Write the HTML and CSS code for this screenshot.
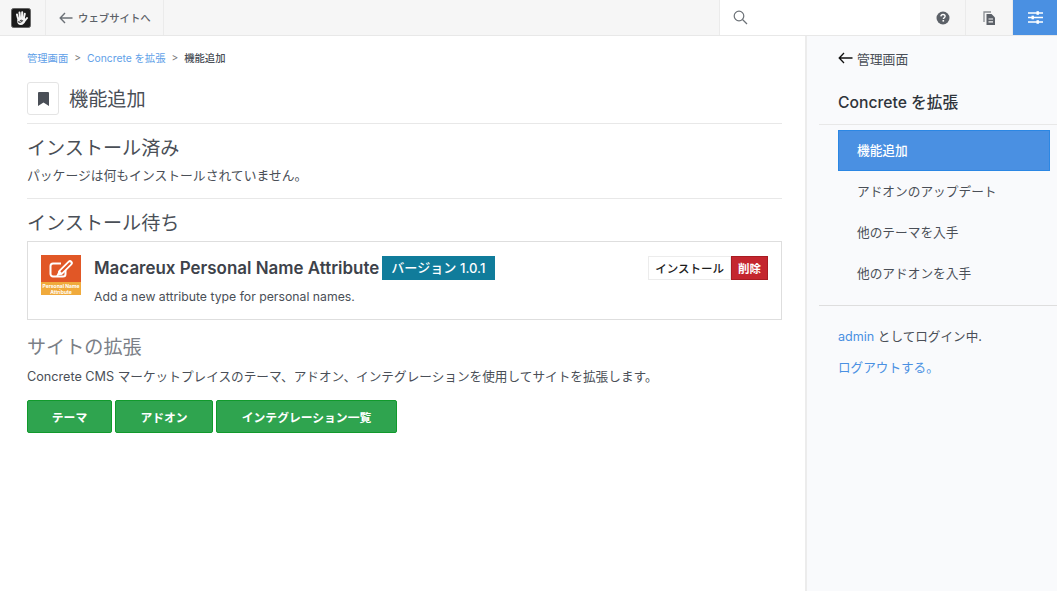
FILE: index.html
```html
<!DOCTYPE html>
<html lang="ja">
  <head>
    <meta charset="UTF-8" />
    <title>機能追加</title>
    <link rel="stylesheet" href="styles.css">
  </head>
  <body>
    <header class="toolbar">
      <div class="tool-logo">
        <svg width="20" height="20" viewBox="0 0 20 20">
          <rect x=".5" y=".5" width="19" height="19" rx="2" fill="#1b1b1b" stroke="#666"/>
          <g stroke="#f4f4f4" stroke-width="2" stroke-linecap="round" fill="none">
            <path d="M6 6.500 6.900 10"/>
            <path d="M8.500 4.500 9 9.500"/>
            <path d="M11.200 4.300 11 9.500"/>
            <path d="M13.800 5.800 12.800 10"/>
            <path d="M16 10 14 12.500"/>
          </g>
          <path d="M6.500 9.500h7.500l.5 3.500c-.8 2.500-2.500 4-4.700 3.900-2.300-.1-3.600-1.500-3.700-3.700z" fill="#f4f4f4"/>
          <path d="M6.800 13.500c1.400 1.300 3.800 1 4.800-.8-1.100-.8-2.500-.5-2.900.5" fill="none" stroke="#1b1b1b" stroke-width="1"/>
        </svg>
      </div>
      <a class="tool-back">
        <svg width="14" height="12" viewBox="0 0 14 12"><path d="M6 1 1.200 6 6 11M1.200 6H13.500" fill="none" stroke="#6c7177" stroke-width="1.400"/></svg>
        <span>ウェブサイトへ</span>
      </a>
      <div class="tool-fill"></div>
      <div class="tool-search">
        <svg width="15" height="15" viewBox="0 0 15 15"><circle cx="6" cy="6" r="4.800" fill="none" stroke="#6c7177" stroke-width="1.200"/><path d="m9.500 9.500 4.500 4.500" stroke="#6c7177" stroke-width="1.300"/></svg>
      </div>
      <div class="tool-btn">
        <svg width="14" height="14" viewBox="0 0 14 14"><circle cx="7" cy="7" r="6.500" fill="#5c6168"/><path d="M4.900 5.400C5 4.100 5.900 3.500 7 3.500c1.200 0 2.100.7 2.100 1.800 0 1.500-1.700 1.400-1.700 2.700" fill="none" stroke="#fff" stroke-width="1.400"/><rect x="6.500" y="9" width="1.600" height="1.600" fill="#fff"/></svg>
      </div>
      <div class="tool-btn tool-btn-wide">
        <svg width="13" height="14" viewBox="0 0 13 14"><path d="M1 11V1h7" fill="none" stroke="#8a8e93" stroke-width="1.300"/><path d="M3.500 3h5L12 6.500V14H3.500z" fill="#5c6168"/><path d="M5.500 8h4.500M5.500 10.800h4.500" stroke="#f8f8f8" stroke-width="1.200"/></svg>
      </div>
      <div class="tool-btn tool-active">
        <svg width="15" height="13" viewBox="0 0 15 13"><path d="M0 2h15M0 6.500h15M0 11h15" stroke="#fff" stroke-width="1.300"/><rect x="8.500" y=".2" width="2.400" height="3.600" fill="#fff"/><rect x="3.500" y="4.700" width="2.400" height="3.600" fill="#fff"/><rect x="8.500" y="9.200" width="2.400" height="3.600" fill="#fff"/></svg>
      </div>
    </header>

    <div class="page">
      <main class="content">
        <nav class="crumbs">
          <a>管理画面</a><i>&gt;</i><a>Concrete を拡張</a><i>&gt;</i><b>機能追加</b>
        </nav>
        <div class="title-row">
          <span class="title-icon">
            <svg width="11" height="14" viewBox="0 0 11 14"><path d="M0 1a1 1 0 0 1 1-1h9a1 1 0 0 1 1 1v13L5.500 10.500 0 14z" fill="#4a4f57"/></svg>
          </span>
          <h1>機能追加</h1>
        </div>

        <section class="block">
          <h2>インストール済み</h2>
          <p>パッケージは何もインストールされていません。</p>
        </section>

        <section class="block">
          <h2>インストール待ち</h2>
          <div class="package">
            <div class="pkg-icon">
              <svg class="pkg-icon-top" width="40" height="27" viewBox="0 0 40 27">
                <rect width="40" height="27" fill="#e15726"/>
                <path d="M20 8.500h-8a2.500 2.500 0 0 0-2.500 2.500v8a2.500 2.500 0 0 0 2.500 2.500h10a2.500 2.500 0 0 0 2.500-2.500v-5" fill="none" stroke="#fff" stroke-width="2"/>
                <path d="M29 8 20 17" stroke="#fff" stroke-width="5.500" stroke-linecap="round"/>
                <path d="M28.800 8.200 20.500 16.500" stroke="#e15726" stroke-width="2" stroke-linecap="round"/>
                <path d="M18 15.500 21.500 19 15 21.500z" fill="#fff"/>
              </svg>
              <div class="pkg-icon-label">Personal Name<br>Attribute</div>
            </div>
            <div class="pkg-body">
              <div class="pkg-name"><strong>Macareux Personal Name Attribute</strong><span class="badge">バージョン 1.0.1</span></div>
              <p>Add a new attribute type for personal names.</p>
            </div>
            <div class="pkg-actions">
              <a class="btn-install">インストール</a><a class="btn-delete">削除</a>
            </div>
          </div>
        </section>

        <h2 class="muted">サイトの拡張</h2>
        <p class="lead">Concrete CMS マーケットプレイスのテーマ、アドオン、インテグレーションを使用してサイトを拡張します。</p>
        <div class="actions">
          <a class="btn-green w-theme">テーマ</a>
          <a class="btn-green w-addon">アドオン</a>
          <a class="btn-green w-list">インテグレーション一覧</a>
        </div>
      </main>

      <aside class="side">
        <a class="side-back">
          <svg width="15" height="12" viewBox="0 0 15 12"><path d="M6 1 1.200 6 6 11M1.200 6H14.500" fill="none" stroke="#111" stroke-width="1.300"/></svg>
          <span>管理画面</span>
        </a>
        <h3>Concrete を拡張</h3>
        <ul class="side-menu">
          <li class="on">機能追加</li>
          <li>アドオンのアップデート</li>
          <li>他のテーマを入手</li>
          <li>他のアドオンを入手</li>
        </ul>
        <div class="side-user">
          <p><a>admin</a> としてログイン中.</p>
          <p><a>ログアウトする。</a></p>
        </div>
      </aside>
    </div>
  </body>
</html>
```

FILE: styles.css
```css
* {
  box-sizing: border-box;
}

html, body {
  height: 100%;
}

body {
  margin: 0;
  overflow: hidden;
  background: #fff;
  color: #4a4f57;
  font-family: Inter, "Noto Sans CJK JP", sans-serif;
  font-size: 12px;
}

p, h1, h2, h3, ul {
  margin: 0;
  padding: 0;
}

a {
  color: #4a90e2;
  text-decoration: none;
}

/* top bar */
.toolbar {
  display: flex;
  height: 36px;
  background: #f6f6f6;
  border-bottom: 1px solid #e8e8e8;
}

.tool-logo {
  width: 46px;
  display: flex;
  align-items: center;
  justify-content: center;
  padding-right: 3px;
  border-right: 1px solid #ebebeb;
}

.tool-back {
  width: 118px;
  display: flex;
  align-items: center;
  gap: 5px;
  padding-left: 13px;
  border-right: 1px solid #ebebeb;
  color: #5c6168;
  font-size: 10.400px;
  font-weight: 500;
}

.tool-fill {
  flex: 1;
}

.tool-search {
  width: 201px;
  display: flex;
  align-items: center;
  padding-left: 13px;
  background: #fff;
  border-left: 1px solid #ebebeb;
}

.tool-btn {
  width: 46px;
  display: flex;
  align-items: center;
  justify-content: center;
  border-right: 1px solid #ebebeb;
}

.tool-btn-wide {
  width: 47px;
}

.tool-active {
  width: 44px;
  background: #4a90e2;
  border-right: 0;
}

/* layout */
.page {
  display: flex;
  height: calc(100% - 36px);
}

.content {
  width: 805px;
  padding: 14px 23px 0 27px;
}

.side {
  width: 252px;
  padding-left: 12px;
  background: #f9fafc;
  border-left: 2px solid #ececec;
}

/* main column */
.crumbs {
  display: flex;
  align-items: center;
  height: 14px;
  font-size: 10.300px;
}

.crumbs a {
  color: #5f9fe8;
}

.crumbs i {
  margin: 0 6px;
  color: #777;
  font-style: normal;
}

.crumbs b {
  color: #4a4f57;
  font-weight: 500;
}

.title-row {
  display: flex;
  align-items: center;
  gap: 10px;
  height: 42px;
  margin-top: 18px;
  padding-bottom: 8px;
  border-bottom: 1px solid #e8e8e8;
}

.title-icon {
  width: 32px;
  height: 33px;
  display: flex;
  align-items: center;
  justify-content: center;
  border: 1px solid #e4e4e4;
  border-radius: 3px;
}

h1 {
  padding-bottom: 2px;
  font-size: 19.200px;
  font-weight: 400;
}

.block {
  padding-top: 11px;
}

.block h2, .muted {
  font-size: 19.100px;
  font-weight: 400;
  line-height: 26px;
}

.block p {
  margin-top: 6px;
  padding-bottom: 14px;
  border-bottom: 1px solid #e8e8e8;
  font-size: 12.800px;
  line-height: 17px;
}

.block + .block {
  padding-top: 11px;
}

.block + .block h2 {
  margin-bottom: 5px;
}

.package {
  display: flex;
  height: 79px;
  padding: 13px 13px 0;
  border: 1px solid #dedede;
}

.pkg-icon {
  width: 40px;
  height: 40px;
  flex-shrink: 0;
}

.pkg-icon-top {
  display: block;
}

.pkg-icon-label {
  height: 13px;
  padding-top: 1px;
  background: #f0aa3c;
  color: #fff;
  font-size: 5px;
  font-weight: 700;
  line-height: 6px;
  text-align: center;
  white-space: nowrap;
}

.pkg-body {
  flex: 1;
  padding: 1px 0 0 13px;
}

.pkg-name {
  display: flex;
  align-items: center;
  gap: 3px;
}

.pkg-name strong {
  font-size: 16.950px;
  font-weight: 600;
  color: #3d424a;
}

.badge {
  height: 24px;
  padding: 0 10px 1px 9px;
  display: flex;
  align-items: center;
  background: #107c9b;
  color: #fff;
  font-size: 13.100px;
  font-weight: 500;
}

.block .pkg-body p {
  margin-top: 8px;
  padding: 0;
  border: 0;
  font-size: 12.250px;
}

.pkg-actions {
  display: flex;
  height: 24px;
  margin-top: 1px;
}

.btn-install {
  height: 24px;
  padding: 0 6px;
  display: flex;
  align-items: center;
  background: #fff;
  border: 1px solid #ececec;
  color: #1d1d1d;
  font-size: 11.500px;
  font-weight: 500;
}

.btn-delete {
  height: 24px;
  padding: 0 6px;
  display: flex;
  align-items: center;
  background: #c4262e;
  border: 1px solid #a81c22;
  color: #fff;
  font-size: 11.500px;
  font-weight: 600;
}

.muted {
  margin-top: 14px;
  color: #7b8087;
}

.lead {
  margin-top: 8px;
  font-size: 12.650px;
  line-height: 17px;
}

.actions {
  display: flex;
  gap: 3px;
  margin-top: 15px;
}

.btn-green {
  height: 33px;
  display: flex;
  align-items: center;
  justify-content: center;
  background: #2fa44f;
  border: 1px solid #119a2c;
  border-radius: 2px;
  color: #fff;
  font-size: 11.800px;
  font-weight: 600;
}

.w-theme { width: 85px; }
.w-addon { width: 98px; }
.w-list { width: 181px; }

/* right column */
.side-back {
  display: flex;
  align-items: center;
  gap: 4px;
  height: 16px;
  margin: 14px 0 0 19px;
  color: #4a4f57;
  font-size: 12.800px;
}

.side h3 {
  margin: 26px 0 0 19px;
  color: #2f343b;
  font-size: 15.700px;
  font-weight: 500;
  line-height: 22px;
}

.side-menu {
  list-style: none;
  margin-top: 10px;
  padding: 5px 7px 11px 19px;
  border-top: 1px solid #e8e8e8;
  border-bottom: 1px solid #dedede;
}

.side-menu li {
  height: 41px;
  padding: 0 0 3px 19px;
  display: flex;
  align-items: center;
  font-size: 12.700px;
}

.side-menu .on {
  padding-left: 18px;
  background: #4a90e2;
  border: 1px solid #2b87e4;
  color: #fff;
  font-weight: 500;
}

.side-user {
  padding: 22px 0 0 19px;
  font-size: 12.600px;
}

.side-user p {
  line-height: 17px;
  margin-bottom: 14px;
}
```
